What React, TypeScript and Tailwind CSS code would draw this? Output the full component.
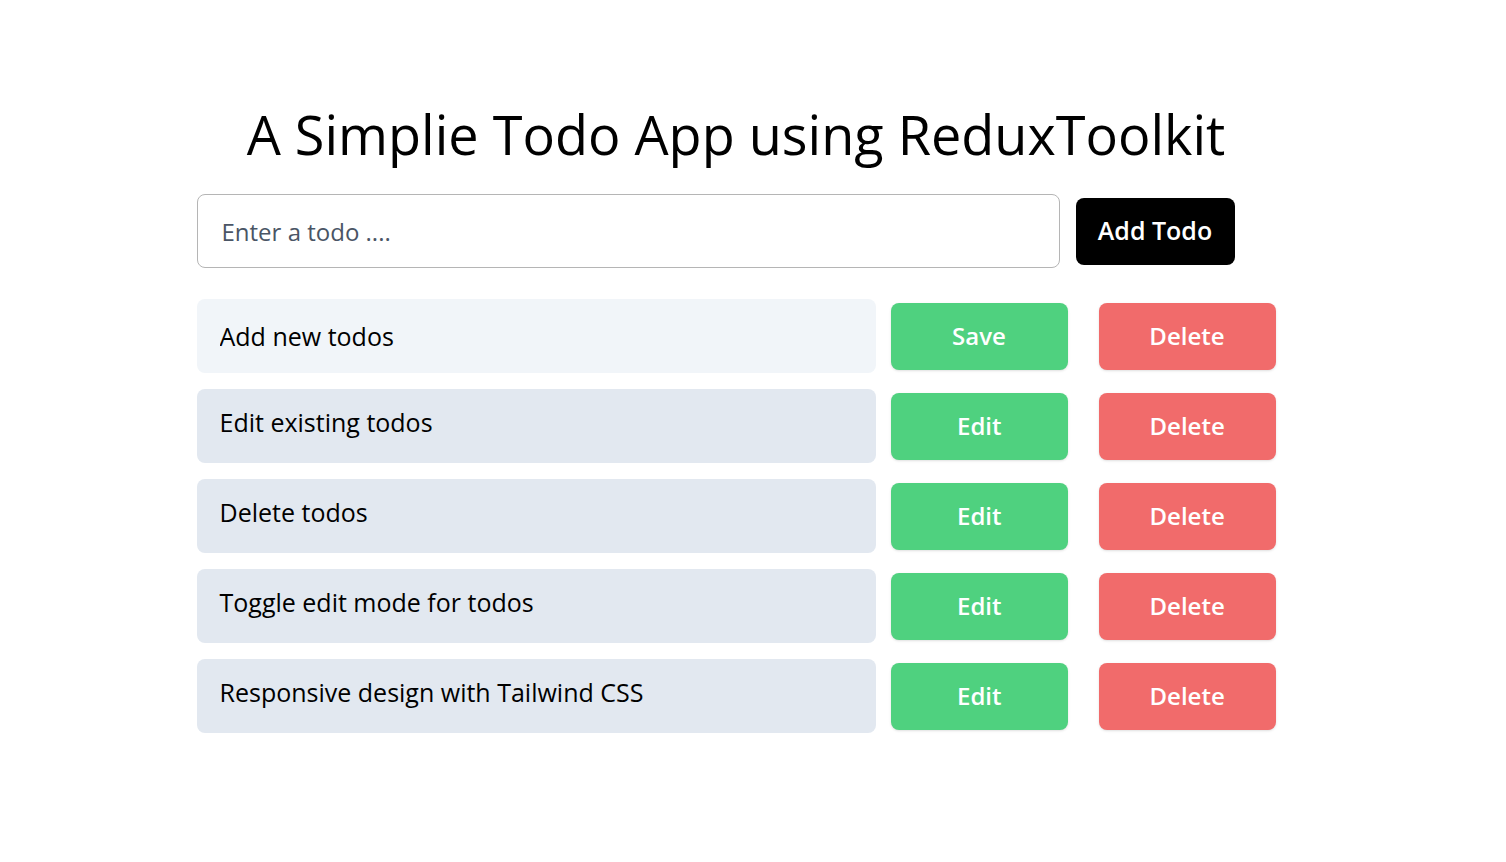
import React, { useState } from 'react';

type Todo = {
  id: number;
  text: string;
};

const initialTodos: Todo[] = [
  { id: 1, text: 'Add new todos' },
  { id: 2, text: 'Edit existing todos' },
  { id: 3, text: 'Delete todos' },
  { id: 4, text: 'Toggle edit mode for todos' },
  { id: 5, text: 'Responsive design with Tailwind CSS' },
];

const App: React.FC = () => {
  const [todos, setTodos] = useState<Todo[]>(initialTodos);
  const [input, setInput] = useState('');
  const [editingId, setEditingId] = useState<number | null>(1);
  const [editText, setEditText] = useState('Add new todos');

  const handleAdd = () => {
    if (!input.trim()) return;
    setTodos([...todos, { id: Date.now(), text: input.trim() }]);
    setInput('');
  };

  const handleEdit = (todo: Todo) => {
    if (editingId === todo.id) {
      setTodos(todos.map((t) => (t.id === todo.id ? { ...t, text: editText } : t)));
      setEditingId(null);
    } else {
      setEditingId(todo.id);
      setEditText(todo.text);
    }
  };

  const handleDelete = (id: number) => {
    setTodos(todos.filter((t) => t.id !== id));
  };

  return (
    <div className="min-h-screen bg-white pr-[34px] font-['Open_Sans',sans-serif] text-black">
      <div className="mx-auto w-[1079px] pt-[98px]">
        <h1 className="text-center text-[54px] leading-[72px]">A Simplie Todo App using ReduxToolkit</h1>

        {/* Add todo form */}
        <div className="mt-[24px] flex items-center gap-4">
          <input
            type="text"
            value={input}
            onChange={(e) => setInput(e.target.value)}
            placeholder="Enter a todo ...."
            className="h-[74px] w-[863px] rounded-lg border border-[#b5b5b5] px-6 text-2xl text-gray-900 placeholder:text-gray-600 outline-none"
          />
          <button
            onClick={handleAdd}
            className="h-[67px] w-[159px] rounded-lg bg-black text-[25px] font-semibold text-white"
          >
            Add Todo
          </button>
        </div>

        {/* Todo list */}
        <ul className="mt-[31px] flex flex-col gap-4">
          {todos.map((todo) => (
            <li key={todo.id} className="flex items-center">
              {editingId === todo.id ? (
                <input
                  type="text"
                  value={editText}
                  onChange={(e) => setEditText(e.target.value)}
                  className="h-[74px] w-[679px] rounded-lg bg-[#f1f5f9] px-[23px] text-[25px] text-black outline-none"
                />
              ) : (
                <div className="flex h-[74px] w-[680px] items-center rounded-lg bg-[#e2e8f0] px-[23px] pb-[6px] text-[25px]">
                  {todo.text}
                </div>
              )}
              <button
                onClick={() => handleEdit(todo)}
                className="ml-[15px] h-[67px] w-[177px] rounded-lg bg-[#4fd17f] text-2xl font-semibold text-white shadow-sm"
              >
                {editingId === todo.id ? 'Save' : 'Edit'}
              </button>
              <button
                onClick={() => handleDelete(todo.id)}
                className="ml-[31px] h-[67px] w-[177px] rounded-lg bg-[#f16b6b] text-2xl font-semibold text-white shadow-sm"
              >
                Delete
              </button>
            </li>
          ))}
        </ul>
      </div>
    </div>
  );
};

export default App;
